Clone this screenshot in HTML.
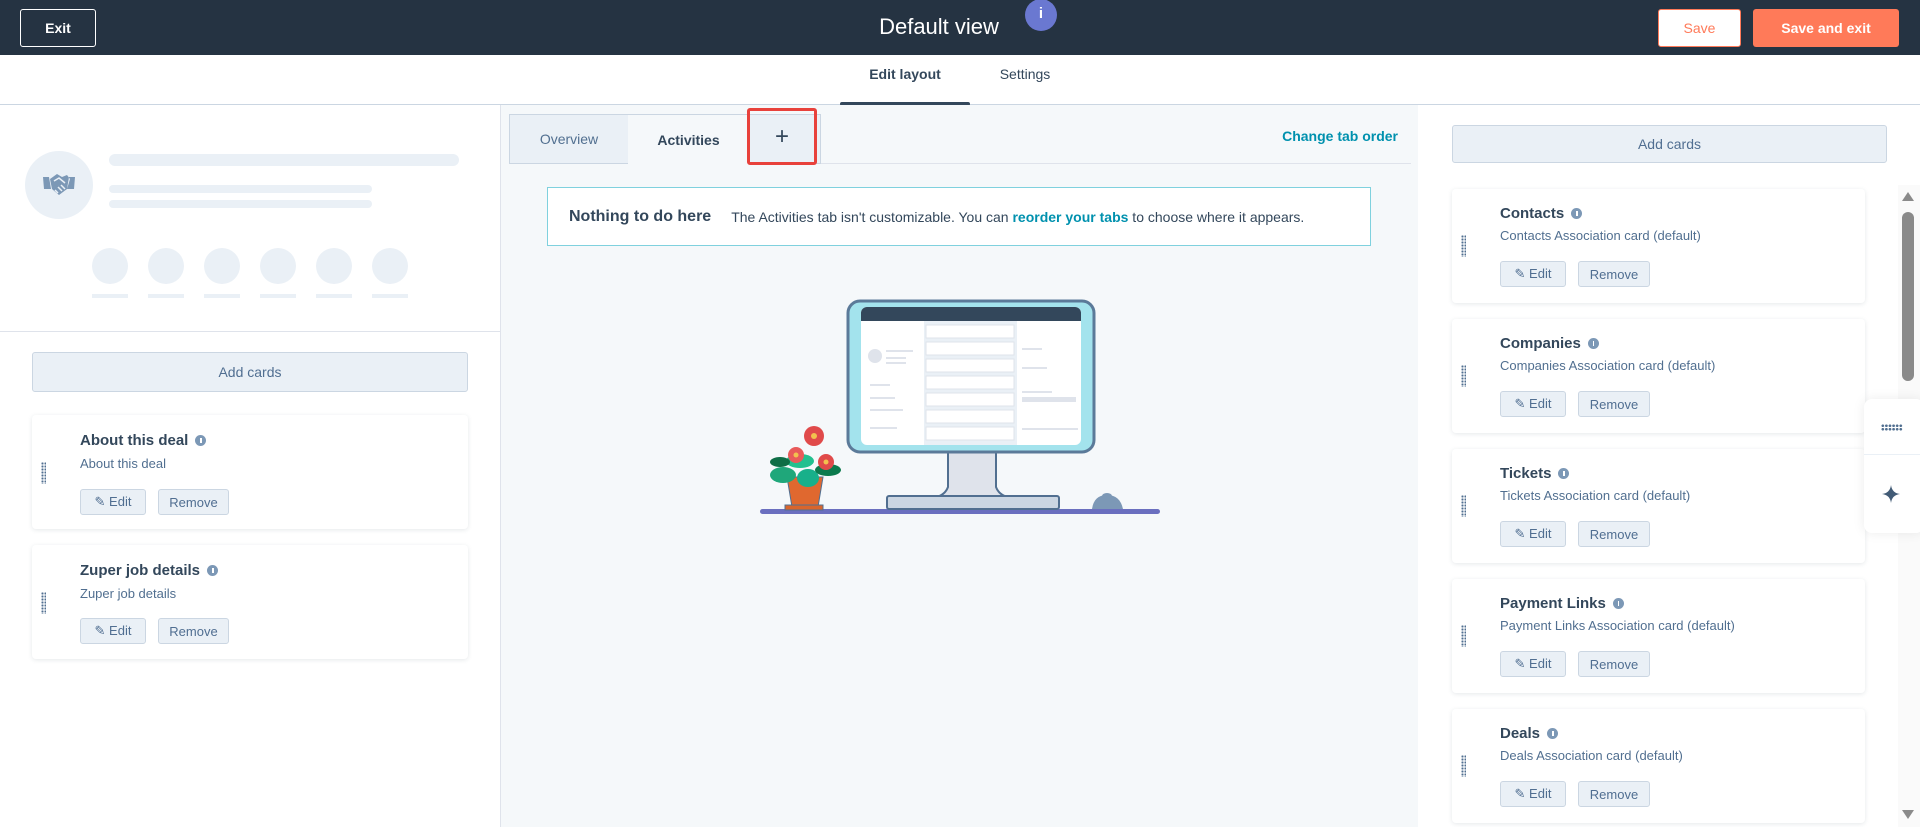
<!DOCTYPE html>
<html><head><meta charset="utf-8"><style>
*{box-sizing:border-box;margin:0;padding:0}
body{width:1920px;height:827px;overflow:hidden;font-family:"Liberation Sans",sans-serif;color:#33475b;background:#fff;position:relative}
.a{position:absolute}
.hdr{left:0;top:0;width:1920px;height:55px;background:#253342}
.btn{position:absolute;display:flex;align-items:center;justify-content:center;font-size:14px;border-radius:3px}
.card{position:absolute;background:#fff;border-radius:4px;box-shadow:0 1px 5px rgba(45,62,80,.12)}
.ct{position:absolute;font-size:15px;font-weight:bold;color:#33475b;display:flex;align-items:center;gap:7px}
.ct i{display:inline-block;width:11px;height:11px;border-radius:50%;background:#7c98b6;position:relative}
.ct i:after{content:"";position:absolute;left:5px;top:3px;width:1.5px;height:5px;background:#fff}
.cs{position:absolute;font-size:13px;color:#516f90}
.sb{position:absolute;height:26px;background:#eaf0f6;border:1px solid #cbd6e2;border-radius:3px;font-size:13px;color:#506e91;display:flex;align-items:center;justify-content:center;gap:6px}
.drag{position:absolute;width:5px;height:22px;background-image:radial-gradient(circle,#516f90 1px,transparent 1.2px);background-size:3px 3px}
.ph{position:absolute;background:#eaf0f6;border-radius:10px}
</style></head><body>
<div class="a hdr"></div>
<div class="btn" style="left:20px;top:9px;width:76px;height:38px;border:1px solid #fff;color:#fff;font-weight:bold">Exit</div>
<div class="a" style="left:0;width:1878px;top:14px;text-align:center;color:#fff;font-size:22px">Default view</div>
<div class="a" style="left:1025px;top:-1px;width:32px;height:32px;border-radius:50%;background:#6a78d1;color:#fff;text-align:center;font-size:15px;line-height:30px;font-weight:bold">i</div>
<div class="btn" style="left:1658px;top:9px;width:83px;height:38px;background:#fff;border:1px solid #ff7a59;color:#ff7a59">Save</div>
<div class="btn" style="left:1753px;top:9px;width:146px;height:38px;background:#ff7a59;color:#fff;font-weight:bold">Save and exit</div>

<div class="a" style="left:0;top:104px;width:1920px;height:1px;background:#cbd6e2"></div>
<div class="a" style="left:840px;top:66px;width:130px;text-align:center;font-size:14px;font-weight:bold;color:#33475b">Edit layout</div>
<div class="a" style="left:840px;top:102px;width:130px;height:4px;background:#33475b;border-radius:2px"></div>
<div class="a" style="left:985px;top:66px;width:80px;text-align:center;font-size:14px;color:#33475b">Settings</div>

<!-- left -->
<div class="a" style="left:500px;top:105px;width:1px;height:722px;background:#dfe3eb"></div>
<div class="a" style="left:25px;top:151px;width:68px;height:68px;border-radius:50%;background:#eaf0f6"></div>
<svg class="a" style="left:42px;top:170px" width="34" height="30" viewBox="0 0 34 30"><path d="M1 7h6l2 12H2z M33 7h-6l-2 12h7z M8 9l7-5 5 3 5-2 3 4 -3 10-8 6-7-6z" fill="#7c98b6"/><path d="M12 11l5-3 6 5M13 20l3 3M16 17l4 4M19 15l4 4" stroke="#eaf0f6" stroke-width="1.5" fill="none"/></svg>
<div class="ph" style="left:109px;top:154px;width:350px;height:12px"></div>
<div class="ph" style="left:109px;top:185px;width:263px;height:8px"></div>
<div class="ph" style="left:109px;top:200px;width:263px;height:8px"></div>
<div class="ph" style="left:92px;top:248px;width:36px;height:36px;border-radius:50%"></div>
<div class="ph" style="left:148px;top:248px;width:36px;height:36px;border-radius:50%"></div>
<div class="ph" style="left:204px;top:248px;width:36px;height:36px;border-radius:50%"></div>
<div class="ph" style="left:260px;top:248px;width:36px;height:36px;border-radius:50%"></div>
<div class="ph" style="left:316px;top:248px;width:36px;height:36px;border-radius:50%"></div>
<div class="ph" style="left:372px;top:248px;width:36px;height:36px;border-radius:50%"></div>
<div class="ph" style="left:92px;top:294px;width:36px;height:4px;border-radius:0"></div>
<div class="ph" style="left:148px;top:294px;width:36px;height:4px;border-radius:0"></div>
<div class="ph" style="left:204px;top:294px;width:36px;height:4px;border-radius:0"></div>
<div class="ph" style="left:260px;top:294px;width:36px;height:4px;border-radius:0"></div>
<div class="ph" style="left:316px;top:294px;width:36px;height:4px;border-radius:0"></div>
<div class="ph" style="left:372px;top:294px;width:36px;height:4px;border-radius:0"></div>
<div class="a" style="left:0;top:331px;width:500px;height:1px;background:#dfe3eb"></div>
<div class="btn" style="left:32px;top:352px;width:436px;height:40px;background:#eaf0f6;border:1px solid #cbd6e2;color:#506e91">Add cards</div>

<div class="card" style="left:32px;top:415px;width:436px;height:114px"></div>
<div class="drag" style="left:41px;top:462px"></div>
<div class="ct" style="left:80px;top:432px">About this deal <i></i></div>
<div class="cs" style="left:80px;top:456px">About this deal</div>
<div class="sb" style="left:80px;top:489px;width:66px">✎ Edit</div>
<div class="sb" style="left:158px;top:489px;width:71px">Remove</div>

<div class="card" style="left:32px;top:545px;width:436px;height:114px"></div>
<div class="drag" style="left:41px;top:592px"></div>
<div class="ct" style="left:80px;top:562px">Zuper job details <i></i></div>
<div class="cs" style="left:80px;top:586px">Zuper job details</div>
<div class="sb" style="left:80px;top:618px;width:66px">✎ Edit</div>
<div class="sb" style="left:158px;top:618px;width:71px">Remove</div>

<!-- middle -->
<div class="a" style="left:501px;top:105px;width:917px;height:722px;background:#f5f8fa"></div>
<div class="a" style="left:509px;top:163px;width:902px;height:1px;background:#dfe3eb"></div>
<div class="a" style="left:509px;top:114px;width:120px;height:50px;background:#eaf0f6;border:1px solid #cbd6e2;font-size:14px;color:#516f90;display:flex;align-items:center;justify-content:center">Overview</div>
<div class="a" style="left:628px;top:114px;width:121px;height:50px;background:#f5f8fa;border-top:1px solid #cbd6e2;font-size:14px;font-weight:bold;display:flex;align-items:center;justify-content:center">Activities</div>
<div class="a" style="left:749px;top:114px;width:72px;height:50px;background:#eaf0f6;border:1px solid #cbd6e2"></div>
<div class="a" style="left:747px;top:108px;width:70px;height:57px;border:3px solid #e8413b;border-radius:3px;font-size:24px;color:#33475b;display:flex;align-items:center;justify-content:center">+</div>
<div class="a" style="left:1200px;top:128px;width:198px;text-align:right;font-size:14px;font-weight:bold;color:#0091ae">Change tab order</div>

<div class="a" style="left:547px;top:187px;width:824px;height:59px;background:#fff;border:1px solid #7fd1de;display:flex;align-items:center;padding-left:21px;font-size:14px;color:#33475b">
<b style="font-size:16px;margin-right:20px">Nothing to do here</b>The Activities tab isn't customizable. You can&nbsp;<b style="color:#0091ae">reorder your tabs</b>&nbsp;to choose where it appears.</div>

<svg class="a" style="left:755px;top:295px" width="410" height="225" viewBox="755 295 410 225">
<rect x="760" y="509" width="400" height="5" rx="2.5" fill="#6a6fbf"/>
<path d="M948 452h48l0 35q3 8 12 10h-72q9-2 12-10z" fill="#dfe3eb" stroke="#516f90" stroke-width="2"/>
<rect x="887" y="496" width="172" height="13" rx="2" fill="#cbd6e2" stroke="#516f90" stroke-width="2"/>
<rect x="848" y="301" width="246" height="151" rx="12" fill="#a3e3ed" stroke="#5b7a99" stroke-width="3"/>
<rect x="861" y="307" width="220" height="138" rx="6" fill="#fff"/>
<path d="M861 313a6 6 0 0 1 6-6h208a6 6 0 0 1 6 6v8h-220z" fill="#33475b"/>
<rect x="924" y="321" width="93" height="124" fill="#eaf0f6"/>
<g fill="#fff" stroke="#dfe3eb"><rect x="926" y="325" width="88" height="13"/><rect x="926" y="342" width="88" height="13"/><rect x="926" y="359" width="88" height="13"/><rect x="926" y="376" width="88" height="13"/><rect x="926" y="393" width="88" height="13"/><rect x="926" y="410" width="88" height="13"/><rect x="926" y="427" width="88" height="13"/></g>
<circle cx="875" cy="356" r="7" fill="#dfe3eb"/>
<g fill="#dfe3eb"><rect x="886" y="350" width="27" height="2"/><rect x="886" y="357" width="20" height="2"/><rect x="886" y="362" width="20" height="2"/><rect x="870" y="384" width="20" height="2"/><rect x="870" y="397" width="25" height="2"/><rect x="870" y="409" width="33" height="2"/><rect x="870" y="427" width="27" height="2"/><rect x="1022" y="348" width="20" height="2"/><rect x="1022" y="367" width="25" height="2"/><rect x="1022" y="391" width="30" height="2"/><rect x="1022" y="397" width="54" height="5"/><rect x="1022" y="428" width="56" height="2"/></g>
<path d="M787 477h36l-5 30h-26z" fill="#e0682f" stroke="#516f90" stroke-width="1"/>
<rect x="785" y="505" width="38" height="5" fill="#d9652c" stroke="#516f90" stroke-width="1"/>
<ellipse cx="783" cy="475" rx="13" ry="8" fill="#1fa77a"/><ellipse cx="808" cy="478" rx="11" ry="9" fill="#18b08a"/><ellipse cx="828" cy="470" rx="13" ry="6" fill="#0b7a4d"/><ellipse cx="800" cy="461" rx="14" ry="7" fill="#22c08f"/><ellipse cx="780" cy="462" rx="10" ry="5" fill="#0e6e46"/>
<circle cx="814" cy="436" r="10" fill="#e04a4a"/><circle cx="814" cy="436" r="3" fill="#f2c14e"/>
<circle cx="796" cy="455" r="8" fill="#e85a5a"/><circle cx="796" cy="455" r="2.5" fill="#f2c14e"/>
<circle cx="826" cy="462" r="8" fill="#e04a4a"/><circle cx="826" cy="462" r="2.5" fill="#f2c14e"/>
<path d="M1092 509q2-14 15-14q13 0 16 14z" fill="#7c98b6"/><ellipse cx="1107" cy="496" rx="5" ry="3" fill="#7c98b6"/>
</svg>

<!-- right -->
<div class="btn" style="left:1452px;top:125px;width:435px;height:38px;background:#eaf0f6;border:1px solid #cbd6e2;color:#506e91">Add cards</div>

<div class="card" style="left:1452px;top:189px;width:413px;height:114px"></div>
<div class="drag" style="left:1461px;top:235px"></div>
<div class="ct" style="left:1500px;top:205px">Contacts <i></i></div>
<div class="cs" style="left:1500px;top:228px">Contacts Association card (default)</div>
<div class="sb" style="left:1500px;top:261px;width:66px">✎ Edit</div>
<div class="sb" style="left:1578px;top:261px;width:72px">Remove</div>

<div class="card" style="left:1452px;top:319px;width:413px;height:114px"></div>
<div class="drag" style="left:1461px;top:365px"></div>
<div class="ct" style="left:1500px;top:335px">Companies <i></i></div>
<div class="cs" style="left:1500px;top:358px">Companies Association card (default)</div>
<div class="sb" style="left:1500px;top:391px;width:66px">✎ Edit</div>
<div class="sb" style="left:1578px;top:391px;width:72px">Remove</div>

<div class="card" style="left:1452px;top:449px;width:413px;height:114px"></div>
<div class="drag" style="left:1461px;top:495px"></div>
<div class="ct" style="left:1500px;top:465px">Tickets <i></i></div>
<div class="cs" style="left:1500px;top:488px">Tickets Association card (default)</div>
<div class="sb" style="left:1500px;top:521px;width:66px">✎ Edit</div>
<div class="sb" style="left:1578px;top:521px;width:72px">Remove</div>

<div class="card" style="left:1452px;top:579px;width:413px;height:114px"></div>
<div class="drag" style="left:1461px;top:625px"></div>
<div class="ct" style="left:1500px;top:595px">Payment Links <i></i></div>
<div class="cs" style="left:1500px;top:618px">Payment Links Association card (default)</div>
<div class="sb" style="left:1500px;top:651px;width:66px">✎ Edit</div>
<div class="sb" style="left:1578px;top:651px;width:72px">Remove</div>

<div class="card" style="left:1452px;top:709px;width:413px;height:114px"></div>
<div class="drag" style="left:1461px;top:755px"></div>
<div class="ct" style="left:1500px;top:725px">Deals <i></i></div>
<div class="cs" style="left:1500px;top:748px">Deals Association card (default)</div>
<div class="sb" style="left:1500px;top:781px;width:66px">✎ Edit</div>
<div class="sb" style="left:1578px;top:781px;width:72px">Remove</div>

<!-- scrollbar -->
<div class="a" style="left:1898px;top:185px;width:22px;height:642px;background:#fafafa"></div>
<div class="a" style="left:1902px;top:192px;width:0;height:0;border-left:6px solid transparent;border-right:6px solid transparent;border-bottom:9px solid #8a8a8a"></div>
<div class="a" style="left:1902px;top:212px;width:12px;height:169px;background:#8a8a8a;border-radius:6px"></div>
<div class="a" style="left:1902px;top:810px;width:0;height:0;border-left:6px solid transparent;border-right:6px solid transparent;border-top:9px solid #8a8a8a"></div>

<!-- floating widget -->
<div class="a" style="left:1864px;top:399px;width:60px;height:134px;background:#fff;border-radius:8px;box-shadow:0 0 12px rgba(0,0,0,.08)"></div>
<div class="a" style="left:1864px;top:454px;width:56px;height:1px;background:#eaf0f6"></div>
<div class="a" style="left:1881px;top:424px;width:22px;height:7px;background-image:radial-gradient(circle,#516f90 1.2px,transparent 1.4px);background-size:3.6px 3.5px"></div>
<svg class="a" style="left:1881px;top:484px" width="20" height="20" viewBox="0 0 20 20"><path d="M10 1Q11 9 19 10Q11 11 10 19Q9 11 1 10Q9 9 10 1z" fill="#425b76"/></svg>
</body></html>
